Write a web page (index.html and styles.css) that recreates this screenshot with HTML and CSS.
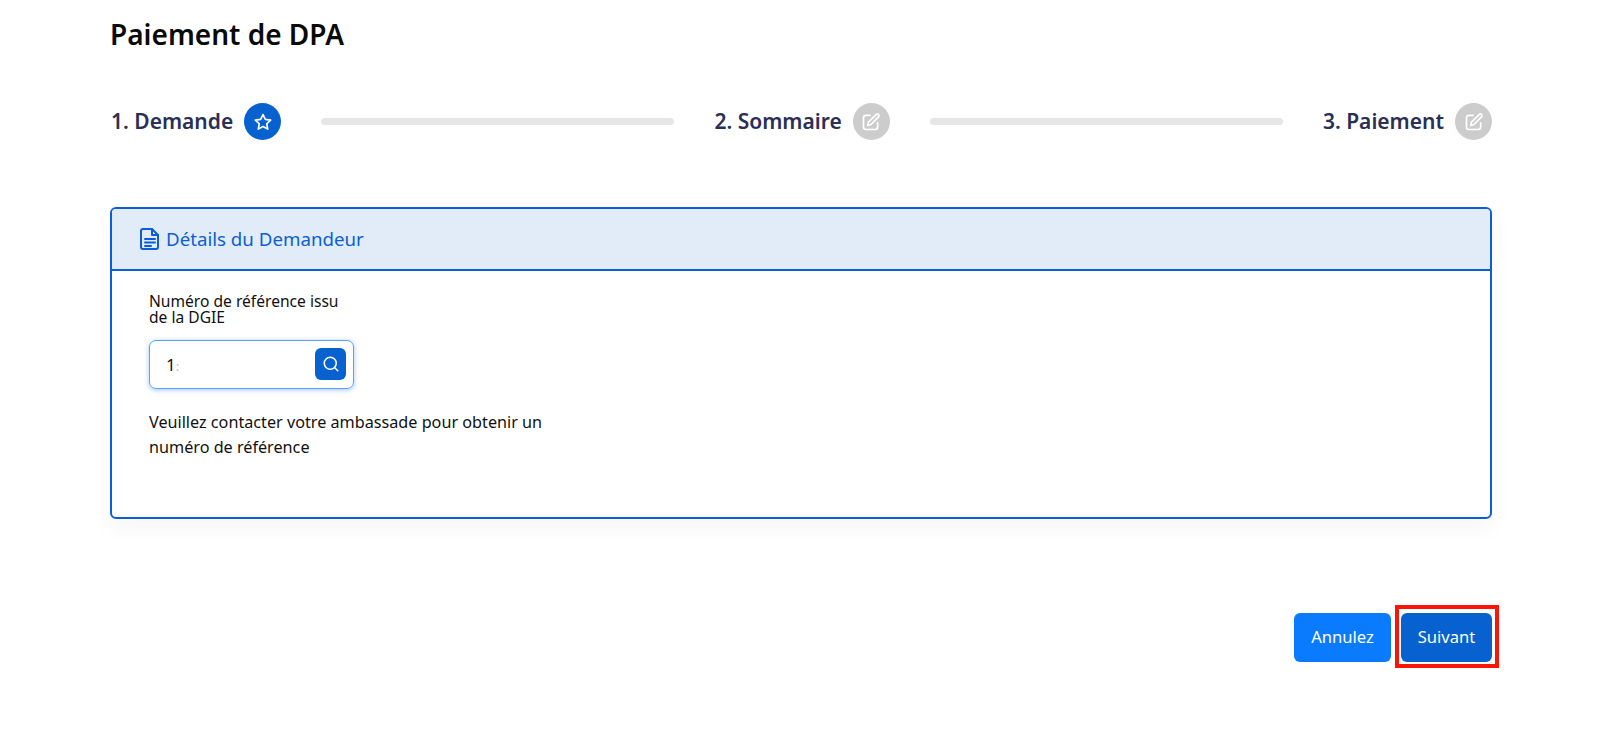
FILE: index.html
```html
<!DOCTYPE html>
<html lang="fr">
<head>
<meta charset="utf-8">
<title>Paiement de DPA</title>
<link rel="stylesheet" href="styles.css">
</head>
<body>
<main class="page">
  <h1 class="title">Paiement de DPA</h1>
  <div class="stepper">
    <div class="step">
      <span class="step-label">1. Demande</span>
      <span class="step-icon active">
        <svg width="20" height="20" viewBox="0 0 24 24" fill="none" stroke="#fff" stroke-width="2" stroke-linejoin="round"><path d="M12 3l2.8 5.9 6.4.8-4.7 4.4 1.2 6.4L12 17.4l-5.7 3.1 1.2-6.4-4.7-4.4 6.4-.8z"/></svg>
      </span>
    </div>
    <div class="bar"></div>
    <div class="step">
      <span class="step-label">2. Sommaire</span>
      <span class="step-icon">
        <svg width="20" height="20" viewBox="0 0 24 24" fill="none" stroke="#fff" stroke-width="2" stroke-linecap="round" stroke-linejoin="round"><path d="M11 4H6a3 3 0 0 0-3 3v11a3 3 0 0 0 3 3h11a3 3 0 0 0 3-3v-5"/><path d="M18.5 2.8a2 2 0 0 1 2.8 2.8L12 15l-4 1 1-4z"/></svg>
      </span>
    </div>
    <div class="bar"></div>
    <div class="step">
      <span class="step-label">3. Paiement</span>
      <span class="step-icon">
        <svg width="20" height="20" viewBox="0 0 24 24" fill="none" stroke="#fff" stroke-width="2" stroke-linecap="round" stroke-linejoin="round"><path d="M11 4H6a3 3 0 0 0-3 3v11a3 3 0 0 0 3 3h11a3 3 0 0 0 3-3v-5"/><path d="M18.5 2.8a2 2 0 0 1 2.8 2.8L12 15l-4 1 1-4z"/></svg>
      </span>
    </div>
  </div>

  <section class="card">
    <header class="card-head">
      <svg width="22" height="24" viewBox="0 0 22 24" fill="none" stroke="#0b5ed7" stroke-width="2" stroke-linecap="round" stroke-linejoin="round"><path d="M4 2h9l6 6v12a2 2 0 0 1-2 2H4a2 2 0 0 1-2-2V4a2 2 0 0 1 2-2z"/><path d="M13 2v6h6"/><path d="M6 12h10M6 15.500h10M6 19h6"/></svg>
      <span class="card-title">Détails du Demandeur</span>
    </header>
    <div class="card-body">
      <label class="field-label" for="ref">Numéro de référence issu<br>de la DGIE</label>
      <div class="input-wrap">
        <span class="input-value" id="ref">1<span class="clip">:</span></span>
        <button class="search" type="button" aria-label="Rechercher">
          <svg width="18" height="18" viewBox="0 0 24 24" fill="none" stroke="#fff" stroke-width="2" stroke-linecap="round"><circle cx="11" cy="11" r="8"/><path d="M21 21l-4.300-4.300"/></svg>
        </button>
      </div>
      <p class="help">Veuillez contacter votre ambassade pour obtenir un<br>numéro de référence</p>
    </div>
  </section>

  <div class="actions">
    <button class="btn btn-cancel" type="button">Annulez</button>
    <button class="btn btn-next" type="button">Suivant</button>
  </div>
</main>
</body>
</html>
```

FILE: styles.css
```css
* { box-sizing: border-box; }
html, body { margin: 0; background: #fff; }
body { font-family: "Noto Sans", "Open Sans", sans-serif; color: #000; height: 729px; overflow: hidden; }
.page { padding: 17px 108px 0 110px; }
.title { margin: 0; font-size: 28px; line-height: 35px; font-weight: 600; color: #0a0a0a; }
.stepper { display: flex; align-items: center; margin-top: 51px; }
.step { display: flex; align-items: center; gap: 11px; }
.step-label { padding: 0 0 2px 1px; font-size: 21px; font-weight: 600; color: #2b2f55; white-space: nowrap; }
.step-icon { width: 37px; height: 37px; border-radius: 50%; background: #cccccc; display: flex; align-items: center; justify-content: center; }
.step-icon.active { background: #0762cf; }
.bar { flex: 1; height: 7px; margin: 0 39px 0 40px; border-radius: 4px; background: #e6e6e6; }
.card { margin-top: 67px; height: 312px; border: 2px solid #0b5ed7; border-radius: 6px; box-shadow: 0 10px 25px rgba(0, 0, 0, .04); background: #fff; overflow: hidden; }
.card-head { height: 62px; background: #e1ecf8; border-bottom: 2px solid #0b5ed7; display: flex; align-items: center; gap: 5px; padding-left: 27px; font-size: 18.7px; color: #0b5ed7; }
.card-title { padding-bottom: 2px; }
.card-body { padding: 22px 37px 20px; }
.field-label { display: block; font-size: 15.6px; line-height: 16px; color: #111; }
.input-wrap { margin-top: 15px; width: 205px; height: 49px; border: 1px solid #5aa2f7; border-radius: 7px; box-shadow: 0 1px 5px rgba(13, 110, 253, .4); display: flex; align-items: center; justify-content: space-between; padding: 0 7px 0 16px; }
.input-value { font-size: 17px; color: #111; }
.clip { color: #bbb; font-size: 13px; }
.search { width: 31px; height: 32px; margin-bottom: 2px; padding: 0; border: 0; border-radius: 6px; background: #0762cf; display: flex; align-items: center; justify-content: center; }
.help { margin: 21px 0 0; font-size: 16.2px; line-height: 25px; color: #111; }
.actions { display: flex; justify-content: flex-end; gap: 10px; margin-top: 94px; }
.btn { height: 49px; padding: 0 0 2px; border: 0; border-radius: 6px; color: #fff; font-family: inherit; font-size: 16.6px; }
.btn-cancel { width: 97px; background: #0a7bfd; }
.btn-next { position: relative; width: 91px; background: #0762cf; }
.btn-next::after { content: ""; position: absolute; left: -6px; right: -7px; top: -8px; bottom: -6px; border: 4px solid #fb1408; }
```
